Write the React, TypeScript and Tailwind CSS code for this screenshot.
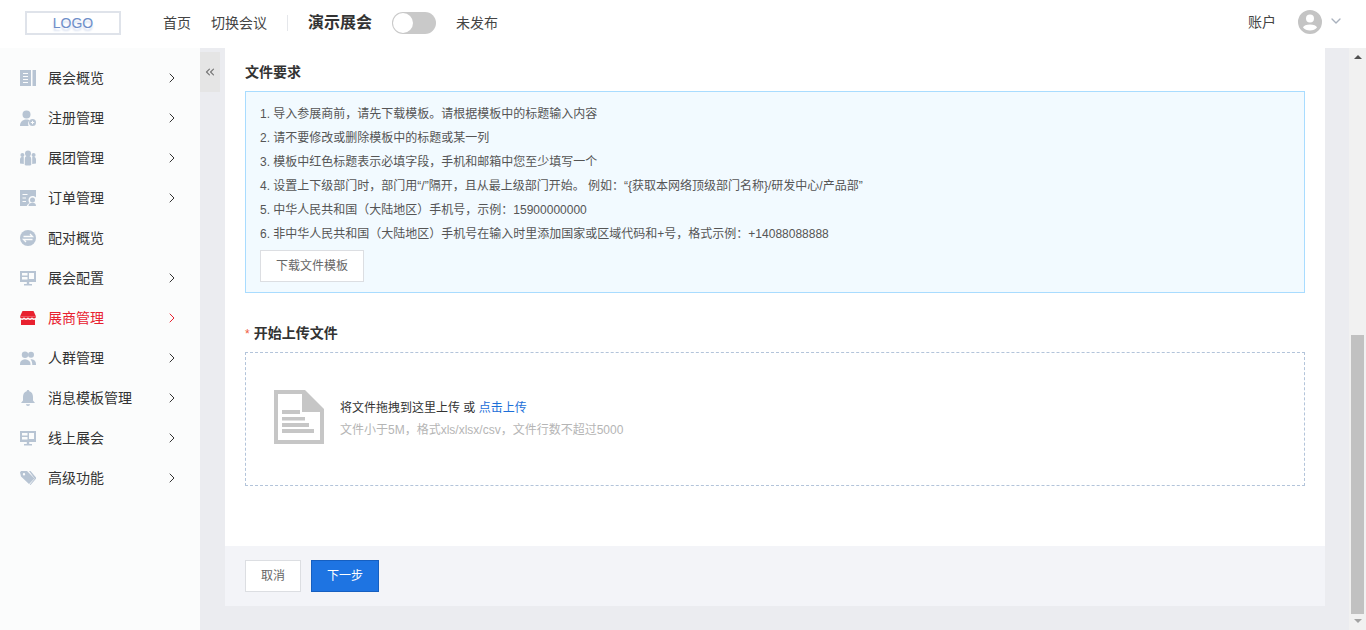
import { ChevronDown, ChevronRight, ChevronsLeft } from 'lucide-react';
import type { ReactNode } from 'react';

const fontStack = "font-['Liberation_Sans','Noto_Sans_CJK_SC',sans-serif]";

const icons: Record<string, ReactNode> = {
  book: (
    <>
      <path d="M0 0h11v16H0zM12.500 0H16v16h-3.500z" />
      <path d="M3 3.500h5M3 6.500h5M3 9.500h5M3 12.500h5" stroke="#fbfcfc" strokeWidth="1" />
    </>
  ),
  userAdd: (
    <>
      <circle cx="6.500" cy="4.500" r="4" />
      <path d="M0 16c0-4 2.500-6.500 6.500-6.500 1.500 0 2.500.3 3.300.8-1.600 1.200-2.200 3.500-1.200 5.700z" />
      <circle cx="12.500" cy="12.500" r="3.500" />
      <path d="M12.500 10.800v3.400M10.800 12.500h3.400" stroke="#fbfcfc" strokeWidth="1" />
    </>
  ),
  team: (
    <>
      <circle cx="8" cy="3.500" r="3" />
      <path d="M4.800 15V9c0-2 1.400-3.200 3.200-3.200s3.200 1.200 3.200 3.200v6c-1 .8-5.400.8-6.400 0z" />
      <circle cx="2.400" cy="5" r="2" />
      <path d="M0 13.500V9.500c0-1.500 1-2.700 2.400-2.700.6 0 1 .1 1.400.4v6.800z" />
      <circle cx="13.600" cy="5" r="2" />
      <path d="M16 13.500V9.500c0-1.500-1-2.700-2.400-2.700-.6 0-1 .1-1.400.4v6.800z" />
    </>
  ),
  order: (
    <>
      <path d="M0 0h16v7.500c-1-1-2-1.500-3.500-1.500-2.300 0-4 1.700-4 4 0 1.200.4 2.200 1.100 2.900C8 13.700 7 14.800 6.800 16H0z" />
      <path d="M2.500 4.500h5M2.500 8h3.500M2.500 11.500h3.500" stroke="#fbfcfc" strokeWidth="1.200" />
      <circle cx="12.500" cy="10" r="2.500" />
      <path d="M8.500 16c0-2 1.800-3.200 4-3.200s3.500 1.200 3.500 3.200z" />
    </>
  ),
  exchange: (
    <>
      <circle cx="8" cy="8" r="8" />
      <path d="M3.500 6.500h9l-2.500-2.500M12.500 9.500h-9l2.500 2.500" stroke="#fbfcfc" strokeWidth="1.300" fill="none" />
    </>
  ),
  monitor: (
    <>
      <path d="M0 1h16v11H0zM4 14h8v1.500H4zM6.800 12h2.400v2H6.800z" />
      <path d="M2 3h5.500v2.500H2zM9 3h5v6H9zM2 7h5.500v2.500H2z" fill="#fbfcfc" />
    </>
  ),
  store: (
    <>
      <path d="M2.500 1h11L16 6.500H0z" />
      <path d="M0 6.500c0 1.300 1 2 2 2s1.500-.5 2-1.200c.5.700 1.200 1.200 2 1.200s1.500-.5 2-1.200c.5.700 1.200 1.200 2 1.200s1.500-.5 2-1.200c.5.700 1 1.200 2 1.200s2-.7 2-2z" />
      <path d="M1 9.800c1.300.3 2.300 0 3-.5.600.4 1.300.6 2 .6s1.400-.2 2-.6c.6.400 1.300.6 2 .6s1.400-.2 2-.6c.7.500 1.700.8 3 .5V15H1z" />
    </>
  ),
  crowd: (
    <>
      <circle cx="11" cy="4.800" r="3" />
      <path d="M10.500 9.200h1.200c2.800.4 4.300 1.900 4.300 4.800v1h-3.700c0-2.600-.6-4.400-1.800-5.800z" />
      <circle cx="5" cy="4.800" r="3.200" />
      <path d="M0 15v-1c0-2.900 1.800-4.500 5-4.800 3.200.3 5.500 1.900 5.500 4.800v1z" />
    </>
  ),
  bell: (
    <>
      <path d="M8 0c.8 0 1.300.5 1.300 1.300 2.500.7 3.700 2.800 3.700 5.700v3.500l2 2.500H1l2-2.500V7c0-2.900 1.200-5 3.700-5.700C6.700.5 7.200 0 8 0z" />
      <path d="M6 14.300h4c0 1-.9 1.700-2 1.700s-2-.7-2-1.700z" />
    </>
  ),
  tag: (
    <>
      <path d="M0 2.500 1 1h6l7.500 7.500-5.500 5.500L1 6.500zM4 3a1.200 1.200 0 1 0 0 2.400A1.200 1.200 0 0 0 4 3z" />
      <path d="M9 1h1.500l5.500 6.500c.3.400.3.900 0 1.200L10.500 15l-.8-.6 5-5.700z" />
    </>
  ),
};

const menu = [
  { label: '展会概览', icon: 'book', arrow: true },
  { label: '注册管理', icon: 'userAdd', arrow: true },
  { label: '展团管理', icon: 'team', arrow: true },
  { label: '订单管理', icon: 'order', arrow: true },
  { label: '配对概览', icon: 'exchange', arrow: false },
  { label: '展会配置', icon: 'monitor', arrow: true },
  { label: '展商管理', icon: 'store', arrow: true, active: true },
  { label: '人群管理', icon: 'crowd', arrow: true },
  { label: '消息模板管理', icon: 'bell', arrow: true },
  { label: '线上展会', icon: 'monitor', arrow: true },
  { label: '高级功能', icon: 'tag', arrow: true },
];

const rules = [
  '1. 导入参展商前，请先下载模板。请根据模板中的标题输入内容',
  '2. 请不要修改或删除模板中的标题或某一列',
  '3. 模板中红色标题表示必填字段，手机和邮箱中您至少填写一个',
  '4. 设置上下级部门时，部门用“/”隔开，且从最上级部门开始。 例如：“{获取本网络顶级部门名称}/研发中心/产品部”',
  '5. 中华人民共和国（大陆地区）手机号，示例：15900000000',
  '6. 非中华人民共和国（大陆地区）手机号在输入时里添加国家或区域代码和+号，格式示例：+14088088888',
];

export default function App() {
  return (
    <div className={`flex h-screen flex-col overflow-hidden bg-[#ebecf0] text-sm text-gray-800 ${fontStack}`}>
      {/* Header */}
      <header className="flex h-12 shrink-0 items-center bg-white pb-0.5 pl-[25px] pr-5.5">
        <div className="flex h-6 w-24 items-center justify-center border-2 border-[#dfe3ea] text-sm text-[#6d8ec9] [text-shadow:0_3px_2px_#d3dcee]">
          LOGO
        </div>
        <a className="ml-10.5 text-[#444]">首页</a>
        <a className="ml-5 text-[#444]">切换会议</a>
        <div className="ml-5 h-4 w-px bg-gray-200" />
        <span className="ml-5 text-base font-bold text-[#333]">演示展会</span>
        <div className="ml-5 flex h-5.5 w-11 items-center rounded-full bg-[#c9c9c9] pl-px">
          <div className="h-5 w-5 rounded-full bg-white" />
        </div>
        <span className="ml-5 text-[#444]">未发布</span>
        <span className="mb-0.5 ml-auto text-[#444]">账户</span>
        <svg viewBox="0 0 24 24" className="mb-0.5 ml-5.5 h-6 w-6 text-[#c4c4c4]" fill="currentColor">
          <path d="M12 0a12 12 0 1 0 0 24 12 12 0 0 0 0-24zm0 4.500a4 4 0 1 1 0 8 4 4 0 0 1 0-8zm0 16c-3 0-5.500-1.200-7-3 .5-2 3.500-3 7-3s6.500 1 7 3c-1.500 1.800-4 3-7 3z" />
        </svg>
        <ChevronDown className="mb-1 ml-1.5 h-4 w-4 text-[#a9b1bd]" />
      </header>

      <div className="relative flex min-h-0 flex-1">
        {/* Sidebar */}
        <nav className="w-50 shrink-0 bg-[#fbfcfc] pt-2.5">
          {menu.map((item) => (
            <div
              key={item.label}
              className={`flex h-10 items-center pl-5 pr-5 ${item.active ? 'text-[#e8212f]' : 'text-[#333]'}`}
            >
              <svg
                viewBox="0 0 16 16"
                className={`h-4 w-4 shrink-0 ${item.active ? 'text-[#e8212f]' : 'text-[#b7c4d3]'}`}
                fill="currentColor"
              >
                {icons[item.icon]}
              </svg>
              <span className="ml-3 flex-1">{item.label}</span>
              {item.arrow && <ChevronRight className="h-4 w-4" strokeWidth={1.5} />}
            </div>
          ))}
        </nav>

        {/* Collapse handle */}
        <button className="absolute left-50 top-1 flex h-10 w-5 items-center justify-center bg-[#e5e5e5] text-[#777]">
          <ChevronsLeft className="h-3.5 w-3.5" strokeWidth={2} />
        </button>

        {/* Main */}
        <main className="flex min-w-0 flex-1 flex-col pb-6 pl-[25px] pr-6">
          <div className="flex flex-1 flex-col bg-white">
            <div className="flex-1 px-5 pt-4">
              <h3 className="font-bold leading-4 text-[#333]">文件要求</h3>
              <div className="mt-[11px] border border-[#a9dcff] bg-[#f2faff] px-3.5 pb-2.5 pt-2.5 text-xs leading-6 text-[#555]">
                {rules.map((rule) => (
                  <p key={rule}>{rule}</p>
                ))}
                <button className="mt-1 h-8 w-26 border border-[#dcdee2] bg-white text-[#666]">下载文件模板</button>
              </div>

              <h3 className="mt-8 font-bold leading-4 text-[#333]">
                <span className="mr-1 text-xs font-normal text-[#f05b3c]">*</span>
                开始上传文件
              </h3>
              <div className="mt-2.5 flex h-33.5 items-center border border-dashed border-[#b3c4da] pl-7">
                <svg viewBox="0 0 50 54" className="mb-1 h-13.5 w-12.5 text-[#c6c6c6]" fill="currentColor">
                  <path d="M0 0h31l19 19v35H0z" />
                  <path d="M4 4h24v18h18v28H4z" fill="#fff" />
                  <path d="M8 20h18v4H8zM8 27h23v3.500H8zM8 33h27v4H8zM8 39h32v4H8z" />
                </svg>
                <div className="ml-4 text-xs">
                  <p className="leading-5 text-[#333]">
                    将文件拖拽到这里上传 或 <a className="text-[#1d6fd8]">点击上传</a>
                  </p>
                  <p className="mt-0.5 leading-5 text-[#b5b5b5]">文件小于5M，格式xls/xlsx/csv，文件行数不超过5000</p>
                </div>
              </div>
            </div>

            {/* Footer */}
            <div className="flex h-15 shrink-0 items-center gap-2.5 bg-[#f3f4f8] pl-5 text-xs">
              <button className="h-8 w-14 border border-[#dcdee2] bg-white text-[#666]">取消</button>
              <button className="h-8 w-17 border border-[#165fc0] bg-[#1e74e2] text-white">下一步</button>
            </div>
          </div>
        </main>

        {/* Scrollbar */}
        <div className="flex w-[17px] shrink-0 flex-col items-center bg-[#f1f1f1]">
          <div className="mt-[7px] h-0 w-0 border-x-4 border-b-4 border-x-transparent border-b-[#505050]" />
          <div className="mt-auto h-[279px] w-[13px] bg-[#c1c1c1]" />
          <div className="mb-[7px] mt-[5px] h-0 w-0 border-x-4 border-t-4 border-x-transparent border-t-[#a3a3a3]" />
        </div>
      </div>
    </div>
  );
}
